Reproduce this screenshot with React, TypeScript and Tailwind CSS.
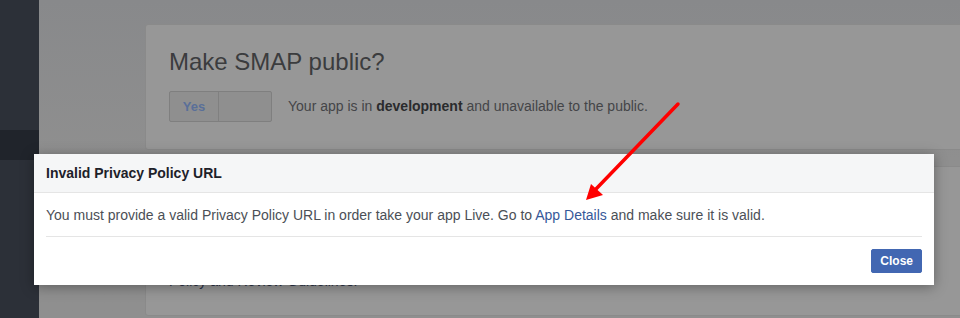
import React from "react";

const Toggle: React.FC = () => (
  <div className="flex h-[31px] w-[103px] rounded-[2px] border border-[#7f7f7f] bg-[#8f8f8f]">
    <div className="flex w-[49px] items-center justify-center border-r border-[#808080] text-[13px] font-bold text-[#5a6f99]">
      Yes
    </div>
    <div className="flex-1" />
  </div>
);

const Arrow: React.FC = () => (
  <svg
    className="pointer-events-none absolute left-0 top-0"
    width="960"
    height="318"
    viewBox="0 0 960 318"
  >
    <line x1="678" y1="104" x2="596" y2="189" stroke="#ff0000" strokeWidth="3.5" strokeLinecap="round" />
    <polygon points="586,200 591,184 603,195" fill="#ff0000" />
  </svg>
);

const App: React.FC = () => {
  return (
    <div className="relative flex h-[318px] w-[960px] overflow-hidden bg-[#8e8e8e] font-['Liberation_Sans',Arial,sans-serif]">
      <aside className="flex w-[39px] shrink-0 flex-col bg-[#2c3038]">
        <div className="h-[130px]" />
        <div className="h-[30px] bg-[#20242b]" />
        <div className="flex-1" />
      </aside>

      <main className="flex flex-1 flex-col bg-gradient-to-b from-[#88898b] via-[#8f8f8f] to-[#8f8f8f] pl-[106px] pt-[24px]">
        <section className="w-[840px] shrink-0 rounded-[3px] border border-[#8a8a8a] bg-[#979797] px-[23px] pb-[27px] pt-[21px]">
          <h1 className="text-[24px] leading-[32px] text-[#3b3c3e]">Make SMAP public?</h1>
          <div className="mt-[13px] flex items-center gap-[16px]">
            <Toggle />
            <p className="text-[14px] text-[#444548]">
              Your app is in <b className="text-[#2a2b2d]">development</b> and unavailable to the public.
            </p>
          </div>
        </section>

        <section className="mt-[16px] h-[150px] w-[840px] shrink-0 rounded-[3px] border border-[#8a8a8a] bg-[#979797] px-[23px] pt-[104px]">
          <p className="text-[14px] text-[#2c3347]">Policy and Review Guidelines.</p>
        </section>
      </main>

      <div className="absolute left-[34px] top-[154px] w-[900px] bg-white shadow-[0_2px_12px_rgba(0,0,0,0.35)]">
        <div className="flex h-[39px] items-center border-b border-[#e5e5e5] bg-[#f5f6f7] px-[12px]">
          <h2 className="text-[14px] font-bold text-[#1d2129]">Invalid Privacy Policy URL</h2>
        </div>
        <div className="px-[12px]">
          <p className="pb-[12px] pt-[13px] text-[14px] leading-[18px] text-[#4b4f56]">
            You must provide a valid Privacy Policy URL in order take your app Live. Go to{" "}
            <a className="text-[#365899]">App Details</a> and make sure it is valid.
          </p>
          <div className="flex justify-end border-t border-[#e5e5e5] pb-[12px] pt-[12px]">
            <button className="h-[24px] rounded-[2px] border border-[#4267b2] bg-[#4267b2] px-[8px] text-[12px] font-bold text-white">
              Close
            </button>
          </div>
        </div>
      </div>

      <Arrow />
    </div>
  );
};

export default App;
